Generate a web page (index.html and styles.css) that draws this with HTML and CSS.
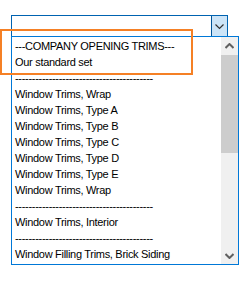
FILE: index.html
```html
<!DOCTYPE html>
<html>
<head>
<meta charset="utf-8">
<link rel="stylesheet" href="styles.css">
</head>
<body>
<div class="stage">
  <div class="combo">
    <div class="combo-field"></div>
    <div class="combo-btn">
      <svg width="9" height="6" viewBox="0 0 9 6"><path d="M0.5 0.5 L4.5 4.5 L8.5 0.5" fill="none" stroke="#333" stroke-width="1.2"/></svg>
    </div>
  </div>
  <div class="list">
    <ul class="items">
      <li>---COMPANY OPENING TRIMS---</li>
      <li>Our standard set</li>
      <li>-----------------------------------------</li>
      <li>Window Trims, Wrap</li>
      <li>Window Trims, Type A</li>
      <li>Window Trims, Type B</li>
      <li>Window Trims, Type C</li>
      <li>Window Trims, Type D</li>
      <li>Window Trims, Type E</li>
      <li>Window Trims, Wrap</li>
      <li>-----------------------------------------</li>
      <li>Window Trims, Interior</li>
      <li>-----------------------------------------</li>
      <li>Window Filling Trims, Brick Siding</li>
    </ul>
    <div class="scrollbar">
      <div class="arrow">
        <svg width="9" height="6" viewBox="0 0 9 6"><path d="M0.5 5 L4.5 1 L8.5 5" fill="none" stroke="#606060" stroke-width="2"/></svg>
      </div>
      <div class="track"><div class="thumb"></div></div>
      <div class="arrow">
        <svg width="9" height="6" viewBox="0 0 9 6"><path d="M0.5 1 L4.5 5 L8.5 1" fill="none" stroke="#606060" stroke-width="2"/></svg>
      </div>
    </div>
  </div>
  <div class="highlight"></div>
</div>
</body>
</html>
```
FILE: styles.css
```css
html, body {
  margin: 0;
  padding: 0;
  background: #ffffff;
}
.stage {
  position: relative;
  width: 250px;
  height: 290px;
  padding-top: 15px;
  padding-left: 11px;
  box-sizing: border-box;
  font-family: "Liberation Sans", Arial, sans-serif;
  font-size: 11px;
  color: #000;
}
.combo {
  display: flex;
  width: 217px;
  height: 21px;
  box-sizing: border-box;
  border: 1px solid #0063b1;
  border-bottom: none;
}
.combo-field {
  flex: 1;
}
.combo-btn {
  width: 16px;
  box-sizing: border-box;
  background: #cce4f7;
  border-left: 1px solid #005499;
  display: flex;
  align-items: center;
  justify-content: center;
}
.combo-btn svg {
  display: block;
  margin-top: 1px;
}
.list {
  display: flex;
  width: 228px;
  height: 229px;
  box-sizing: border-box;
  border: 1px solid #0078d7;
}
.items {
  list-style: none;
  margin: 0;
  padding: 1px 0 0 3px;
  flex: 1;
  overflow: hidden;
}
.items li {
  height: 16px;
  line-height: 16px;
  white-space: nowrap;
  letter-spacing: -0.3px;
}
.scrollbar {
  width: 17px;
  background: #f0f0f0;
  display: flex;
  flex-direction: column;
}
.arrow {
  height: 17px;
  display: flex;
  align-items: center;
  justify-content: center;
}
.arrow svg {
  display: block;
}
.track {
  flex: 1;
}
.thumb {
  margin-top: 1px;
  height: 98px;
  background: #cdcdcd;
}
.highlight {
  position: absolute;
  left: 0;
  top: 29px;
  width: 193px;
  height: 46px;
  box-sizing: border-box;
  border: 2px solid #f58025;
}
```
